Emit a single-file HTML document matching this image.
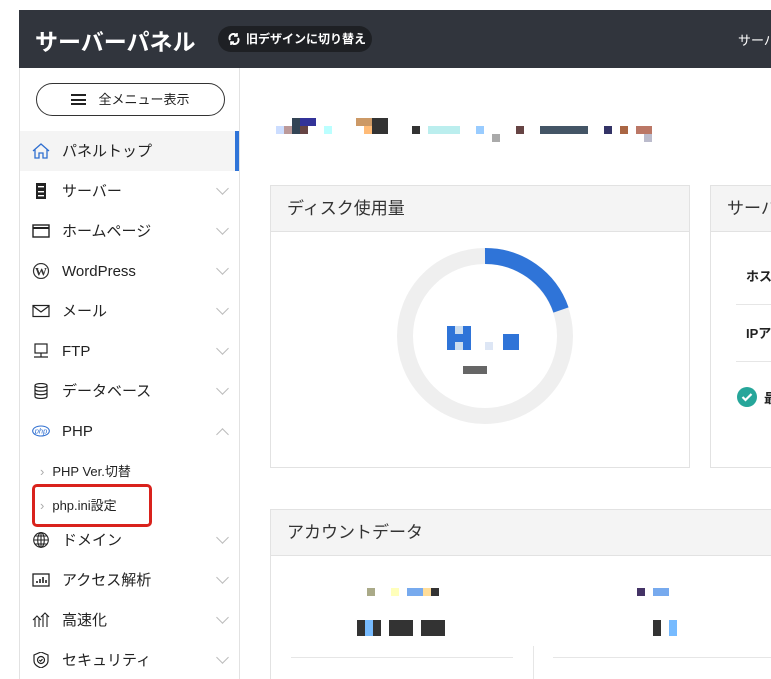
<!DOCTYPE html>
<html><head><meta charset="utf-8"><style>
*{box-sizing:border-box;margin:0;padding:0}
html,body{width:771px;height:679px;overflow:hidden;background:#fff;font-family:"Liberation Sans","Noto Sans CJK JP",sans-serif;color:#222;position:relative}
.abs{position:absolute}
.hdr{position:absolute;left:19px;top:10px;width:752px;height:58px;background:#31353d;overflow:hidden}
.title{position:absolute;left:16px;top:13px;color:#fff;font-size:23px;font-weight:bold;white-space:nowrap}
.old{position:absolute;left:199px;top:16px;height:26px;width:154px;background:#1e2024;border-radius:13px;color:#fff;font-size:12px;font-weight:bold;line-height:26px;padding-left:28px;white-space:nowrap}
.side{position:absolute;left:19px;top:68px;width:221px;height:611px;border-left:1px solid #e2e2e2;border-right:1px solid #e2e2e2;overflow:hidden}
.allbtn{position:absolute;left:16px;top:15px;width:189px;height:33px;border:1px solid #333;border-radius:17px;font-size:13px;line-height:31px;text-align:center}
.item{position:absolute;left:0;width:219px;height:40px;font-size:15px;line-height:41px;white-space:nowrap}
.item .ic{position:absolute;left:12px;top:12px;width:18px;height:16px}
.item .tx{position:absolute;left:42px}
.item .chev{position:absolute;left:198px;top:13px;width:9px;height:9px;border-right:1px solid #bbb;border-bottom:1px solid #bbb;transform:rotate(45deg)}
.sub{position:absolute;left:36px;font-size:13px;white-space:nowrap}
.card{position:absolute;border:1px solid #e2e2e2;background:#fff;overflow:hidden}
.ch{height:46px;background:#f4f4f4;border-bottom:1px solid #e2e2e2;font-size:17px;line-height:46px;padding-left:16px;white-space:nowrap;color:#333}
.px{position:absolute}
</style></head><body>
<div class="hdr">
 <div class="title">サーバーパネル</div>
 <div class="old"><svg class="abs" style="left:9px;top:6px" width="14" height="14" viewBox="0 0 14 14" fill="none" stroke="#fff" stroke-width="2"><path d="M3 8a4 4 0 0 1 7-4M11 6a4 4 0 0 1-7 4"/><path d="M10 1v3H7M4 13v-3h3" stroke-width="1.6"/></svg>旧デザインに切り替え</div>
 <div class="abs" style="left:719px;top:20px;color:#fff;font-size:13px;white-space:nowrap">サーバー</div>
</div>
<div class="side">
 <div class="allbtn"><span style="display:inline-block;width:15px;height:11px;border-top:2px solid #222;border-bottom:2px solid #222;position:relative;vertical-align:-1px;margin-right:12px"><span style="position:absolute;left:0;top:3px;width:15px;height:2px;background:#222"></span></span>全メニュー表示</div>
 <div class="item" style="top:63px;background:#f4f4f4"><svg class="ic" viewBox="0 0 18 16" fill="none" stroke="#2f6fd0" stroke-width="1.3"><path d="M1 8L9 1l8 7M3 6.5V15h4v-5h4v5h4V6.5"/></svg><span class="tx">パネルトップ</span><div class="abs" style="left:215px;top:0;width:4px;height:40px;background:#2f74d8"></div></div>
 <div class="item" style="top:103px"><svg class="ic" viewBox="0 0 18 16"><rect x="4" y="-1" width="10" height="18" fill="#222"/><rect x="6" y="3" width="6" height="1.4" fill="#fff"/><rect x="6" y="8" width="6" height="1.4" fill="#fff"/><rect x="6" y="12" width="6" height="1.4" fill="#fff"/></svg><span class="tx">サーバー</span><div class="chev"></div></div>
 <div class="item" style="top:143px"><svg class="ic" viewBox="0 0 18 16" fill="none" stroke="#222" stroke-width="1.4"><rect x="1" y="2" width="16" height="12"/><path d="M1 5h16" stroke-width="2"/></svg><span class="tx">ホームページ</span><div class="chev"></div></div>
 <div class="item" style="top:183px"><svg class="ic" viewBox="0 0 18 16"><circle cx="9" cy="8" r="7.5" fill="none" stroke="#333" stroke-width="1.2"/><text x="9" y="12.5" font-size="12" font-family="Liberation Serif" text-anchor="middle" fill="#333" font-weight="bold">W</text></svg><span class="tx">WordPress</span><div class="chev"></div></div>
 <div class="item" style="top:223px"><svg class="ic" viewBox="0 0 18 16" fill="none" stroke="#222" stroke-width="1.2"><rect x="1" y="2.5" width="16" height="11"/><path d="M1 3l8 6 8-6"/></svg><span class="tx">メール</span><div class="chev"></div></div>
 <div class="item" style="top:263px"><svg class="ic" viewBox="0 0 18 16" fill="none" stroke="#222" stroke-width="1.2"><rect x="3" y="1" width="12" height="9"/><path d="M9 10v4M2 14h14"/></svg><span class="tx">FTP</span><div class="chev"></div></div>
 <div class="item" style="top:303px"><svg class="ic" viewBox="0 0 18 16" fill="none" stroke="#222" stroke-width="1.2"><ellipse cx="9" cy="2.5" rx="6" ry="2"/><path d="M3 2.5v11c0 2.6 12 2.6 12 0v-11M3 6.2c0 2.6 12 2.6 12 0M3 9.8c0 2.6 12 2.6 12 0"/></svg><span class="tx">データベース</span><div class="chev"></div></div>
 <div class="item" style="top:343px"><svg class="ic" viewBox="0 0 18 16"><ellipse cx="9" cy="8" rx="8.3" ry="5" fill="none" stroke="#2f6fd0" stroke-width="1.1"/><text x="9" y="10.5" font-size="7.5" font-style="italic" text-anchor="middle" fill="#2f6fd0">php</text></svg><span class="tx">PHP</span><div class="chev" style="transform:rotate(225deg);top:19px"></div></div>
 <div class="sub" style="top:393px"><span style="color:#aaa;margin-right:8px;margin-left:-16px">›</span>PHP Ver.切替</div>
 <div class="sub" style="top:427px"><span style="color:#aaa;margin-right:8px;margin-left:-16px">›</span>php.ini設定</div>
 <div class="abs" style="left:12px;top:416px;width:120px;height:43px;border:3px solid #d9221c;border-radius:5px"></div>
 <div class="item" style="top:452px"><svg class="ic" viewBox="0 0 18 16" fill="none" stroke="#222" stroke-width="1.1"><circle cx="9" cy="8" r="7.3"/><ellipse cx="9" cy="8" rx="3.3" ry="7.3"/><path d="M1.7 8h14.6M3 4h12M3 12h12M9 .7v14.6"/></svg><span class="tx">ドメイン</span><div class="chev"></div></div>
 <div class="item" style="top:492px"><svg class="ic" viewBox="0 0 18 16" fill="none" stroke="#222" stroke-width="1.3"><rect x="1" y="2" width="16" height="12"/><path d="M5 11v-2M8 11V7M11 11V5M14 11V8" stroke-width="1.6"/></svg><span class="tx">アクセス解析</span><div class="chev"></div></div>
 <div class="item" style="top:532px"><svg class="ic" viewBox="0 0 18 16" fill="none" stroke="#222" stroke-width="1.1"><path d="M1 8l4-4 4 4M3 6v9M7 6v9M9 5l4-4 4 4M11 3v12M15 3v12"/></svg><span class="tx">高速化</span><div class="chev"></div></div>
 <div class="item" style="top:572px"><svg class="ic" viewBox="0 0 18 16" fill="none" stroke="#222" stroke-width="1.2"><path d="M9 0L16 3v6c0 3-3 5.5-7 7C5 14.5 2 12 2 9V3z"/><circle cx="9" cy="8" r="3.5"/><path d="M7.3 8l1.2 1.2 2-2"/></svg><span class="tx">セキュリティ</span><div class="chev"></div></div>
</div>

<div class="px" style="left:276px;top:126px;width:8px;height:8px;background:#cdf"></div>
<div class="px" style="left:284px;top:126px;width:8px;height:8px;background:#b99"></div>
<div class="px" style="left:292px;top:118px;width:8px;height:16px;background:#345"></div>
<div class="px" style="left:300px;top:118px;width:16px;height:8px;background:#339"></div>
<div class="px" style="left:300px;top:126px;width:8px;height:8px;background:#644"></div>
<div class="px" style="left:324px;top:126px;width:8px;height:8px;background:#bff"></div>
<div class="px" style="left:356px;top:118px;width:16px;height:8px;background:#c96"></div>
<div class="px" style="left:364px;top:126px;width:8px;height:8px;background:#fb7"></div>
<div class="px" style="left:372px;top:118px;width:16px;height:16px;background:#333"></div>
<div class="px" style="left:412px;top:126px;width:8px;height:8px;background:#333"></div>
<div class="px" style="left:428px;top:126px;width:32px;height:8px;background:#bee"></div>
<div class="px" style="left:476px;top:126px;width:8px;height:8px;background:#9cf"></div>
<div class="px" style="left:492px;top:134px;width:8px;height:8px;background:#aaa"></div>
<div class="px" style="left:516px;top:126px;width:8px;height:8px;background:#644"></div>
<div class="px" style="left:540px;top:126px;width:48px;height:8px;background:#456"></div>
<div class="px" style="left:604px;top:126px;width:8px;height:8px;background:#336"></div>
<div class="px" style="left:620px;top:126px;width:8px;height:8px;background:#a64"></div>
<div class="px" style="left:636px;top:126px;width:16px;height:8px;background:#b76"></div>
<div class="px" style="left:644px;top:134px;width:8px;height:8px;background:#bbc"></div>

<div class="card" style="left:270px;top:185px;width:420px;height:283px"><div class="ch">ディスク使用量</div>
 <svg class="abs" style="left:124px;top:60px" width="180" height="180" viewBox="0 0 180 180"><circle cx="90" cy="90" r="80" fill="none" stroke="#efefef" stroke-width="16"/><path d="M90 10A80 80 0 0 1 166 64" fill="none" stroke="#2f74d8" stroke-width="16"/></svg>
 <div class="px" style="left:176px;top:140px;width:24px;height:24px;background:#2f74d8"></div>
 <div class="px" style="left:184px;top:140px;width:8px;height:8px;background:#cde"></div>
 <div class="px" style="left:184px;top:156px;width:8px;height:8px;background:#cde"></div>
 <div class="px" style="left:232px;top:148px;width:16px;height:16px;background:#2f74d8"></div>
 <div class="px" style="left:214px;top:156px;width:8px;height:8px;background:#dde6f5"></div>
 <div class="px" style="left:192px;top:180px;width:24px;height:8px;background:#666"></div>
</div>
<div class="card" style="left:710px;top:185px;width:61px;height:283px;border-right:none"><div class="ch">サーバー情報</div>
 <div class="abs" style="left:35px;top:80px;font-size:13px;font-weight:bold;white-space:nowrap">ホスト名</div>
 <div class="abs" style="left:25px;top:118px;width:60px;border-top:1px solid #e6e6e6"></div>
 <div class="abs" style="left:35px;top:137px;font-size:13px;font-weight:bold;white-space:nowrap">IPアドレス</div>
 <div class="abs" style="left:25px;top:175px;width:60px;border-top:1px solid #e6e6e6"></div>
 <div class="abs" style="left:26px;top:201px;width:20px;height:20px;border-radius:50%;background:#26a69a"><svg width="20" height="20"><path d="M5.5 10l3 3 6-6" fill="none" stroke="#fff" stroke-width="2.2"/></svg></div>
 <div class="abs" style="left:53px;top:202px;font-size:13px;font-weight:bold;white-space:nowrap">最新</div>
</div>
<div class="card" style="left:270px;top:509px;width:501px;height:170px;border-right:none;border-bottom:none"><div class="ch">アカウントデータ</div>
 <div class="px" style="left:96px;top:78px;width:8px;height:8px;background:#aa8"></div>
 <div class="px" style="left:120px;top:78px;width:8px;height:8px;background:#ffb"></div>
 <div class="px" style="left:136px;top:78px;width:32px;height:8px;background:#7ae"></div>
 <div class="px" style="left:152px;top:78px;width:8px;height:8px;background:#fd9"></div>
 <div class="px" style="left:160px;top:78px;width:8px;height:8px;background:#333"></div>
 <div class="px" style="left:86px;top:110px;width:24px;height:16px;background:#333"></div>
 <div class="px" style="left:94px;top:110px;width:8px;height:16px;background:#7bf"></div>
 <div class="px" style="left:118px;top:110px;width:24px;height:16px;background:#333"></div>
 <div class="px" style="left:150px;top:110px;width:24px;height:16px;background:#333"></div>
 <div class="px" style="left:366px;top:78px;width:8px;height:8px;background:#436"></div>
 <div class="px" style="left:382px;top:78px;width:16px;height:8px;background:#7ae"></div>
 <div class="px" style="left:382px;top:110px;width:8px;height:16px;background:#333"></div>
 <div class="px" style="left:398px;top:110px;width:8px;height:16px;background:#7bf"></div>
 <div class="abs" style="left:20px;top:147px;width:222px;border-top:1px solid #e6e6e6"></div>
 <div class="abs" style="left:262px;top:136px;height:40px;border-left:1px solid #e6e6e6"></div>
 <div class="abs" style="left:282px;top:147px;width:219px;border-top:1px solid #e6e6e6"></div>
</div>
</body></html>
